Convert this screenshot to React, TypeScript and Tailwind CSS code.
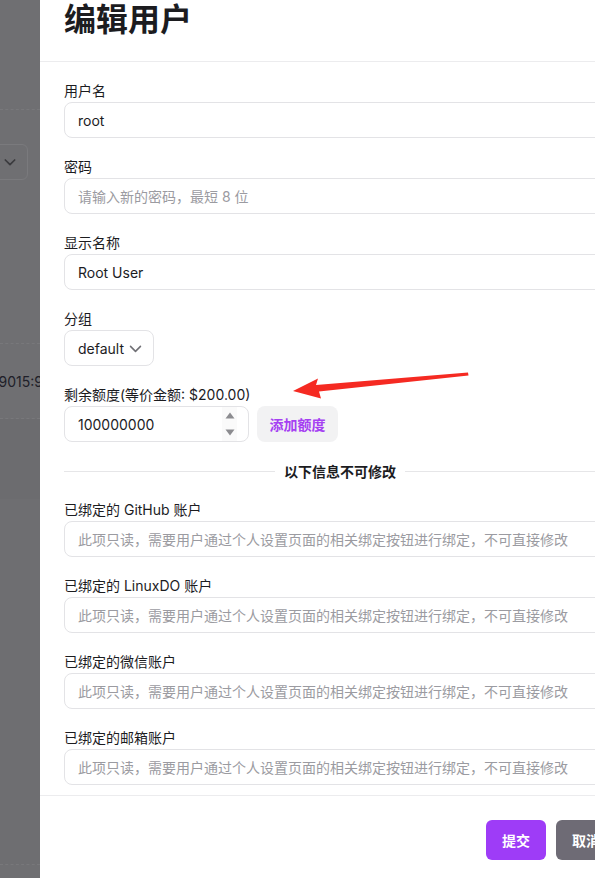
import React from "react";

const READONLY_HINT =
  "此项只读，需要用户通过个人设置页面的相关绑定按钮进行绑定，不可直接修改";

function Label({ children }: { children: React.ReactNode }) {
  return (
    <div className="text-[14px] leading-5 text-[#1c1c1f] mb-px whitespace-nowrap">
      {children}
    </div>
  );
}

function TextBox({
  value,
  placeholder,
}: {
  value?: string;
  placeholder?: string;
}) {
  return (
    <div className="h-9 w-full rounded-lg border border-[#e3e3e6] bg-white px-[13px] flex items-center text-[14px] whitespace-nowrap overflow-hidden">
      {value ? (
        <span className="text-[#1c1c1f]">{value}</span>
      ) : (
        <span className="text-[#9b9ba1]">{placeholder}</span>
      )}
    </div>
  );
}

function Chevron({ className, width = 2 }: { className?: string; width?: number }) {
  return (
    <svg viewBox="0 0 24 24" className={className} fill="none" stroke="currentColor" strokeWidth={width} strokeLinecap="round" strokeLinejoin="round">
      <path d="M5 9l7 7 7-7" />
    </svg>
  );
}

function Field({ label, children }: { label: string; children: React.ReactNode }) {
  return (
    <div className="flex flex-col">
      <Label>{label}</Label>
      {children}
    </div>
  );
}

// The page behind the drawer, seen through the dimmed backdrop
function BackdropStrip() {
  return (
    <div className="relative w-[40px] shrink-0 h-full overflow-hidden bg-[#6f6f72]">
      <div className="flex flex-col">
        <div className="h-[110px] border-b border-dashed border-[#78787b]" />
        <div className="h-[34px]" />
        <div className="h-9 w-[48px] -ml-[20px] rounded-md border border-[#7a7a7d] flex items-center justify-end pr-[9px] text-[#3b3b3e]">
          <Chevron className="w-[16px] h-[16px]" width={2.6} />
        </div>
        <div className="h-[164px] border-b border-dashed border-[#78787b]" />
        <div className="h-[75px] border-b border-dashed border-[#78787b] flex items-center justify-end overflow-hidden">
          <span className="text-[14px] text-[#202029] whitespace-nowrap -mr-[3px]">
            4e:9015:9
          </span>
        </div>
        <div className="h-[80px] bg-[#6c6c6f]" />
        <div className="h-[366px] border-b border-dashed border-[#78787b] bg-[#6e6e71]" />
      </div>
    </div>
  );
}

function RedArrow() {
  return (
    <svg
      className="absolute left-0 top-0 pointer-events-none"
      width="595"
      height="878"
      viewBox="0 0 595 878"
    >
      <polygon
        fill="#f52a22"
        points="293,391 318,378.5 316,385 468,372.5 468.5,375.5 319,391.5 321,398.5"
      />
    </svg>
  );
}

export default function App() {
  return (
    <div className="relative w-[595px] h-[878px] overflow-hidden flex bg-white font-[Inter,'Noto_Sans_CJK_SC',sans-serif]">
      <BackdropStrip />

      <div className="w-[600px] shrink-0 h-full bg-white flex flex-col">
        {/* header */}
        <div className="h-[62px] shrink-0 border-b border-[#ececee] px-6">
          <h1 className="text-[32px] leading-10 font-bold text-[#1c1c1f] whitespace-nowrap">
            编辑用户
          </h1>
        </div>

        {/* body */}
        <div className="flex-1 overflow-hidden px-6 pt-[19px] flex flex-col gap-[19px]">
          <Field label="用户名">
            <TextBox value="root" />
          </Field>
          <Field label="密码">
            <TextBox placeholder="请输入新的密码，最短 8 位" />
          </Field>
          <Field label="显示名称">
            <TextBox value="Root User" />
          </Field>
          <Field label="分组">
            <div className="h-9 w-[90px] rounded-lg border border-[#e3e3e6] pl-[13px] pr-[9px] flex items-center justify-between text-[14px] text-[#1c1c1f]">
              <span>default</span>
              <Chevron className="w-[17px] h-[17px] text-[#707075]" width={2.2} />
            </div>
          </Field>
          <Field label="剩余额度(等价金额: $200.00)">
            <div className="flex items-center gap-[8px]">
              <div className="h-9 w-[185px] rounded-lg border border-[#e3e3e6] pl-[13px] pr-[11px] flex items-center justify-between text-[14px] text-[#1c1c1f]">
                <span>100000000</span>
                <div className="h-full w-[15px] bg-[#fafafa] flex flex-col items-center justify-between py-[5px]">
                  <svg width="10" height="7" viewBox="0 0 10 7">
                    <path d="M5 0.5L9.5 6.5H0.5Z" fill="#8c8c90" />
                  </svg>
                  <svg width="10" height="7" viewBox="0 0 10 7">
                    <path d="M5 6.5L9.5 0.5H0.5Z" fill="#8c8c90" />
                  </svg>
                </div>
              </div>
              <button className="h-9 w-[81px] rounded-lg bg-[#f2f2f3] text-[14px] font-semibold text-[#a540f2]">
                添加额度
              </button>
            </div>
          </Field>

          <div className="h-5 flex items-center gap-[9px]">
            <div className="flex-1 h-px bg-[#e6e6e8]" />
            <span className="text-[14px] font-bold text-[#1c1c1f] whitespace-nowrap">
              以下信息不可修改
            </span>
            <div className="flex-1 h-px bg-[#e6e6e8]" />
          </div>

          <Field label="已绑定的 GitHub 账户">
            <TextBox placeholder={READONLY_HINT} />
          </Field>
          <Field label="已绑定的 LinuxDO 账户">
            <TextBox placeholder={READONLY_HINT} />
          </Field>
          <Field label="已绑定的微信账户">
            <TextBox placeholder={READONLY_HINT} />
          </Field>
          <Field label="已绑定的邮箱账户">
            <TextBox placeholder={READONLY_HINT} />
          </Field>
        </div>

        {/* footer */}
        <div className="h-[83px] shrink-0 border-t border-[#ececee] px-6 pt-6 flex justify-end items-start gap-[10px]">
          <button className="h-10 w-[60px] rounded-md bg-[#9e3cf7] text-white text-[14px] font-bold">
            提交
          </button>
          <button className="h-10 w-[60px] rounded-md bg-[#6e6b75] text-white text-[14px] font-bold">
            取消
          </button>
        </div>
      </div>

      <RedArrow />
    </div>
  );
}
